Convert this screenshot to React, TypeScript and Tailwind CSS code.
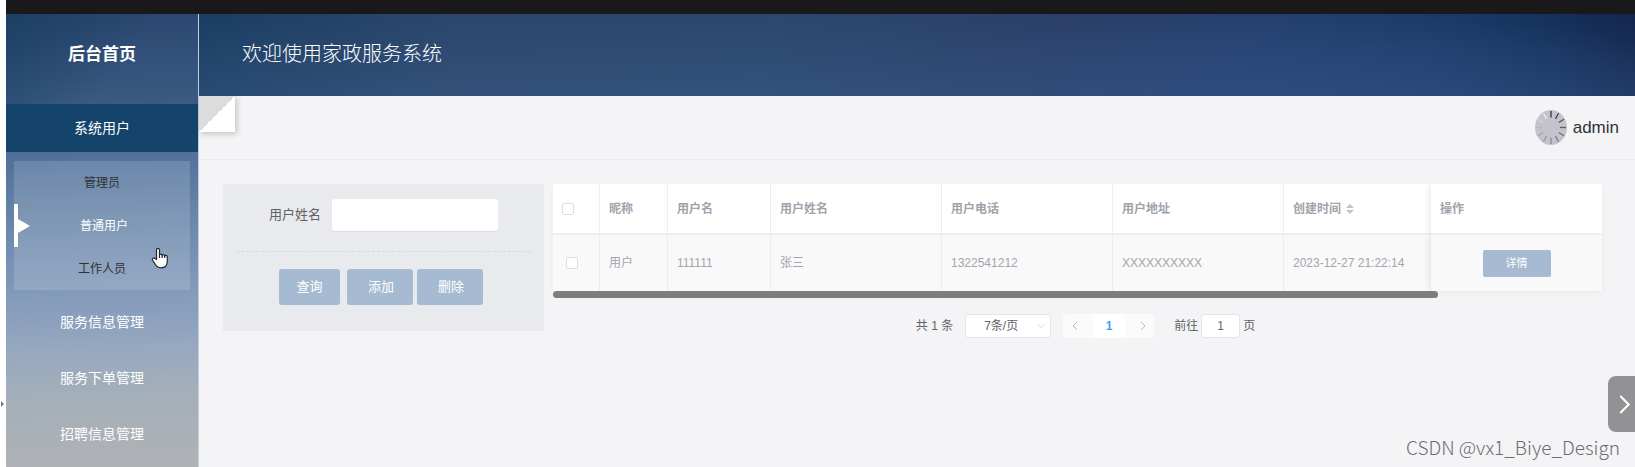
import { useState } from "react";

const MENU = ["服务信息管理", "服务下单管理", "招聘信息管理"];
const SUB_MENU = ["管理员", "普通用户", "工作人员"];

const ROWS = [
  {
    nickname: "用户",
    username: "111111",
    name: "张三",
    phone: "1322541212",
    address: "XXXXXXXXXX",
    createTime: "2023-12-27 21:22:14",
  },
];

const SPOKES = [
  "#26272b", "#3a3b40", "#4d4e54", "#5f6066", "#6c6d73", "#7a7b82",
  "#85868d", "#92939a", "#a4a5ac", "#b7b8bf", "#d2d3d8", "#f0f0f3",
];

function Sidebar() {
  const [current, setCurrent] = useState("普通用户");

  return (
    <aside className="w-[193px] shrink-0 border-r border-[#c3ccd9] bg-[linear-gradient(178deg,#2b4670_0%,#3a5a82_20%,#52729c_32%,#6784a8_44%,#7a94b6_56%,#8a9fbd_66%,#97a9bf_74%,#a4afb9_84%,#b0b2b5_100%)] text-center text-white">
      <h1 className="h-[90px] bg-[linear-gradient(130deg,rgba(20,58,92,0.6),transparent_60%)] pt-[25px] text-[17px] leading-8 font-bold">
        后台首页
      </h1>
      <nav>
        <button className="block h-12 w-full bg-[#14446c] text-[14px]">系统用户</button>
        <ul className="mx-2 mt-[9px] bg-white/15 text-[12px]">
          {SUB_MENU.map((item) => (
            <li key={item}>
              <button
                onClick={() => setCurrent(item)}
                className={
                  item === current
                    ? "relative block h-[43px] w-full border-l-4 border-white text-white"
                    : "block h-[43px] w-full text-[#303133]"
                }
              >
                {item === current && (
                  <span className="absolute top-1/2 left-0 -translate-y-1/2 border-y-[7px] border-l-[12px] border-y-transparent border-l-white" />
                )}
                {item}
              </button>
            </li>
          ))}
        </ul>
        <div className="pt-1">
          {MENU.map((item) => (
            <button key={item} className="block h-14 w-full text-[14px]">
              {item}
            </button>
          ))}
        </div>
      </nav>
    </aside>
  );
}

function Avatar() {
  return (
    <svg className="h-[35px] w-8" viewBox="0 0 32 35" preserveAspectRatio="none">
      <ellipse cx="16" cy="17.5" rx="16" ry="17.5" fill="#c2c3cd" />
      <g transform="translate(16 17.5) scale(1 1.1)">
        {SPOKES.map((color, i) => (
          <line
            key={i}
            y1="-9"
            y2="-15"
            stroke={color}
            strokeWidth="1.2"
            transform={`rotate(${i * 30})`}
          />
        ))}
      </g>
    </svg>
  );
}

function TopBar() {
  return (
    <div className="relative flex h-16 items-center justify-end border-b border-[#ebebee] pr-4">
      <div className="absolute top-0 left-0 size-9 bg-[linear-gradient(135deg,#dcdcdc_50%,#fff_50%)] shadow-[2px_2px_6px_rgba(0,0,0,0.2)]" />
      <div className="flex items-center gap-1.5 text-[17px] text-[#303133]">
        <Avatar />
        admin
      </div>
    </div>
  );
}

function SearchPanel() {
  const button = "h-9 rounded-[3px] bg-[#a6bbd1] text-[13px] text-white";

  return (
    <form
      onSubmit={(e) => e.preventDefault()}
      className="h-[147px] w-[321px] shrink-0 bg-[#e9eaee] px-[13px] pt-[15px]"
    >
      <div className="flex items-center justify-center gap-[11px] pb-5">
        <label htmlFor="name" className="text-[13px] text-[#606266]">
          用户姓名
        </label>
        <input
          id="name"
          className="h-8 w-[166px] rounded-[3px] bg-white px-3 text-[13px] shadow-[0_1px_1px_rgba(0,0,0,0.06)] outline-none"
        />
      </div>
      <div className="flex border-t border-dashed border-[#d9dad6] pt-[17px] pl-[43px]">
        <button className={`${button} mr-[7px] w-[61px]`}>查询</button>
        <button className={`${button} mr-1 w-[66px] pl-0.5`}>添加</button>
        <button className={`${button} w-[66px] pl-0.5`}>删除</button>
      </div>
    </form>
  );
}

function SortIcon() {
  return (
    <svg className="ml-1 inline size-[10px] align-[-1px]" viewBox="0 0 10 10" fill="#c0c4cc">
      <path d="M1 4 5 0l4 4zM1 6l4 4 4-4z" />
    </svg>
  );
}

function CheckBox({ label }: { label: string }) {
  return (
    <input
      type="checkbox"
      aria-label={label}
      className="block size-3 appearance-none rounded-[2px] border border-[#dcdfe9] bg-white checked:bg-[#a6bbd1]"
    />
  );
}

function UserTable() {
  const cell = "border-r border-[#ebeef5] px-[9px]";
  const fixed = "px-[9px] shadow-[0_0_8px_rgba(0,0,0,0.14)] [clip-path:inset(0_0_0_-8px)]";

  return (
    <div>
      <table className="w-full table-fixed border-separate border-spacing-0 text-left text-[12px] text-[#a2a5ad] shadow-[0_2px_6px_rgba(0,0,0,0.04)]">
        <colgroup>
          <col className="w-[47px]" />
          <col className="w-[68px]" />
          <col className="w-[103px]" />
          <col className="w-[171px]" />
          <col className="w-[171px]" />
          <col className="w-[171px]" />
          <col className="w-[147px]" />
          <col />
        </colgroup>
        <thead className="bg-white text-[#a0a3ab] [&_th]:h-[51px] [&_th]:border-b-2 [&_th]:border-b-[#eeeeef]">
          <tr>
            <th className={cell}>
              <CheckBox label="全选" />
            </th>
            <th className={cell}>昵称</th>
            <th className={cell}>用户名</th>
            <th className={cell}>用户姓名</th>
            <th className={cell}>用户电话</th>
            <th className={cell}>用户地址</th>
            <th className="px-[9px]">
              创建时间
              <SortIcon />
            </th>
            <th className={fixed}>操作</th>
          </tr>
        </thead>
        <tbody className="bg-[#f9f9fa] [&_td]:h-14">
          {ROWS.map((row) => (
            <tr key={row.username}>
              <td className="border-r border-[#ebeef5] px-[13px]">
                <CheckBox label={row.name} />
              </td>
              <td className={cell}>{row.nickname}</td>
              <td className={cell}>{row.username}</td>
              <td className={cell}>{row.name}</td>
              <td className={cell}>{row.phone}</td>
              <td className={cell}>{row.address}</td>
              <td className="px-[9px]">{row.createTime}</td>
              <td className={`${fixed} text-center`}>
                <button className="h-[27px] w-[68px] rounded-[2px] bg-[#a6bbd1] text-[11px] text-white">
                  详情
                </button>
              </td>
            </tr>
          ))}
        </tbody>
      </table>
      <div className="relative h-[7px] w-[84.4%] rounded-full bg-[#7d7d7d]" />
    </div>
  );
}

function Chevron({ d, className }: { d: string; className: string }) {
  return (
    <svg className={className} viewBox="0 0 10 10" fill="none" stroke="currentColor">
      <path d={d} />
    </svg>
  );
}

function Pagination() {
  return (
    <div className="flex h-6 items-center justify-center pl-4 text-[12px] text-[#606266]">
      <span className="mr-3">共 1 条</span>
      <div className="relative mr-3">
        <select
          aria-label="每页条数"
          className="block h-6 w-[86px] appearance-none rounded-[3px] border border-[#e2e4ea] bg-white pl-[18px] text-[12px]"
        >
          <option>7条/页</option>
        </select>
        <Chevron
          d="M1 3l4 4 4-4"
          className="pointer-events-none absolute top-2 right-1.5 size-2 text-[#c0c4cc]"
        />
      </div>
      <div className="mr-5 flex overflow-hidden rounded-[3px] bg-[#fbfbfc] text-[#b4b7bd]">
        <button aria-label="上一页" className="flex h-6 w-[30px] items-center justify-center pr-1.5">
          <Chevron d="M7 1L3 5l4 4" className="size-[10px]" />
        </button>
        <button className="h-6 w-8 bg-white font-bold text-[#409eff]">1</button>
        <button aria-label="下一页" className="flex h-6 w-[29px] items-center justify-center pl-1.5">
          <Chevron d="M3 1l4 4-4 4" className="size-[10px]" />
        </button>
      </div>
      <label htmlFor="page">前往</label>
      <input
        id="page"
        defaultValue="1"
        className="mx-[3px] h-6 w-[39px] rounded-[3px] border border-[#e2e4ea] bg-white text-center outline-none"
      />
      页
    </div>
  );
}

function HandCursor() {
  return (
    <svg
      className="pointer-events-none absolute top-[247px] left-[151px] h-[22px] w-[18px]"
      viewBox="0 0 18 22"
      fill="#fff"
      stroke="#22262e"
      strokeWidth="1.2"
      strokeLinejoin="round"
    >
      <path d="M5.5 12.5V3c0-2.3 3-2.3 3 0v5c0-1.2 2.6-1.2 2.6.4 0-1.2 2.6-1 2.6.6 0-1 2.6-.8 2.6 1V14c0 4.500-2.500 6.800-6.300 6.800-3.500 0-5-2-6.200-4.300L1.500 13c-.8-1.700 1.400-2.700 2.500-1.400z" />
      <path d="M8.500 8v3M11.100 8.400v2.600M13.700 9v2" />
    </svg>
  );
}

export default function App() {
  return (
    <div className="relative flex min-h-screen overflow-hidden bg-[#f4f4f7] font-['Liberation_Sans','Noto_Sans_CJK_SC',sans-serif]">
      <div className="flex w-1.5 shrink-0 items-center bg-white">
        <span className="mt-[341px] ml-px border-y-[3px] border-l-[3px] border-y-transparent border-l-[#777]" />
      </div>
      <div className="flex min-w-0 flex-1 flex-col">
        <div className="h-3.5 bg-[#191919]" />
        <div className="flex flex-1">
          <Sidebar />
          <main className="min-w-0 flex-1">
            <header className="flex h-[82px] items-center bg-[radial-gradient(ellipse_30%_100%_at_78%_100%,rgba(48,76,134,0.4),transparent),linear-gradient(180deg,transparent,rgba(70,105,155,0.3)),linear-gradient(100deg,#1b3d62_0%,#2c466c_18%,#2b476e_40%,#2a3f69_60%,#243f6e_74%,#1b3967_86%,#142f5a_94%,#11244b_100%)] px-[43px] pb-1">
              <h2 className="font-['Noto_Sans_CJK_SC',sans-serif] text-[20px] font-light text-white">
                欢迎使用家政服务系统
              </h2>
            </header>
            <TopBar />
            <section className="flex gap-[9px] pt-6 pr-[33px] pl-6">
              <SearchPanel />
              <div className="min-w-0 flex-1">
                <UserTable />
                <div className="mt-4">
                  <Pagination />
                </div>
              </div>
            </section>
          </main>
        </div>
      </div>
      <HandCursor />
      <button
        aria-label="展开"
        className="absolute right-0 bottom-[35px] flex h-14 w-[27px] items-center justify-center rounded-l-lg bg-[#929294] pl-1.5 text-white"
      >
        <Chevron d="M3 1l4 4-4 4" className="size-[21px]" />
      </button>
      <div className="pointer-events-none absolute right-[15px] bottom-1 font-['Noto_Sans_CJK_SC',sans-serif] text-[19px] leading-8 font-light text-[#6c6d70]">
        CSDN @vx1_Biye_Design
      </div>
    </div>
  );
}
